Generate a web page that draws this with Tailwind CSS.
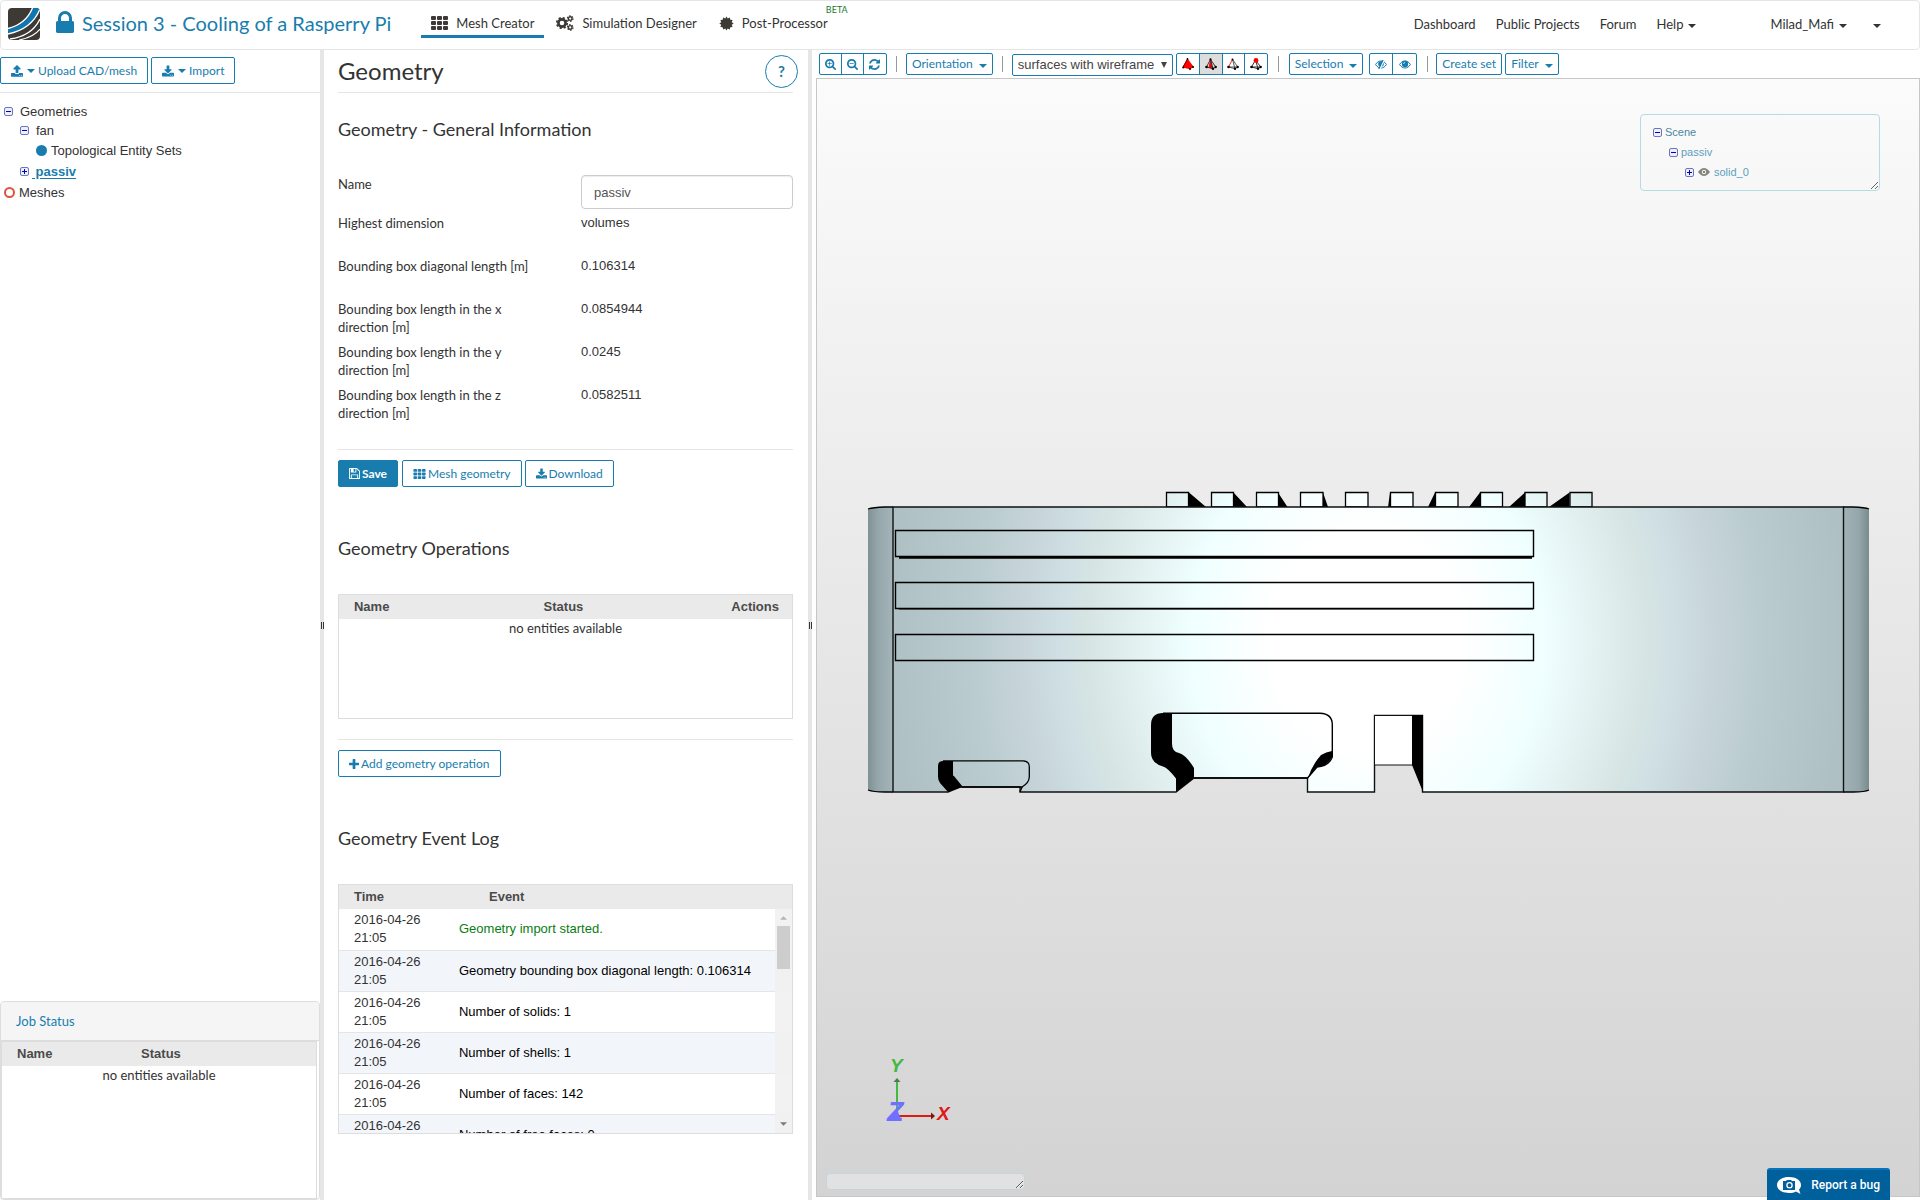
<!DOCTYPE html>
<html lang="en">
<head>
    <meta charset="UTF-8">
    <title>Session 3 - Cooling of a Rasperry Pi</title>
    <script src="https://cdn.jsdelivr.net/npm/@tailwindcss/browser@4"></script>
</head>
<body class="h-screen flex flex-col overflow-hidden bg-white font-['Lato',sans-serif] text-[13px] leading-[18px] text-[#333]">

<!-- Icons -->
<svg class="hidden">
    <symbol id="lock" viewBox="320 128 1152 1408"><path d="M640 768h512v-192q0-106-75-181t-181-75-181 75-75 181v192zm832 96v576q0 40-28 68t-68 28h-960q-40 0-68-28t-28-68v-576q0-40 28-68t68-28h32v-192q0-184 132-316t316-132 316 132 132 316v192h32q40 0 68 28t28 68z"/></symbol>
    <symbol id="grid" viewBox="0 0 17 14">
        <rect width="5" height="4" rx="1"/><rect x="6" width="5" height="4" rx="1"/><rect x="12" width="5" height="4" rx="1"/>
        <rect y="5" width="5" height="4" rx="1"/><rect x="6" y="5" width="5" height="4" rx="1"/><rect x="12" y="5" width="5" height="4" rx="1"/>
        <rect y="10" width="5" height="4" rx="1"/><rect x="6" y="10" width="5" height="4" rx="1"/><rect x="12" y="10" width="5" height="4" rx="1"/>
    </symbol>
    <symbol id="cogs" viewBox="0 0 18 16">
        <g fill="none" stroke="currentColor">
            <circle cx="6" cy="8" r="3.6" stroke-width="2.6"/>
            <circle cx="6" cy="8" r="5.2" stroke-width="1.8" stroke-dasharray="2.2 1.884"/>
            <circle cx="14.2" cy="3.6" r="1.8" stroke-width="1.4"/>
            <circle cx="14.2" cy="3.6" r="2.8" stroke-width="1.2" stroke-dasharray="1.5 1.432"/>
            <circle cx="14.2" cy="12.4" r="1.8" stroke-width="1.4"/>
            <circle cx="14.2" cy="12.4" r="2.8" stroke-width="1.2" stroke-dasharray="1.5 1.432"/>
        </g>
    </symbol>
    <symbol id="burst" viewBox="0 0 16 16">
        <path d="M8 .5 9.300 2.600 11.600 1.500 12 4 14.500 4.300 13.600 6.600 15.700 8 13.600 9.400 14.500 11.700 12 12 11.600 14.500 9.300 13.400 8 15.500 6.700 13.400 4.400 14.500 4 12 1.500 11.700 2.400 9.400.3 8 2.400 6.600 1.500 4.300 4 4 4.400 1.500 6.700 2.600z"/>
    </symbol>
    <symbol id="caret" viewBox="0 0 8 4"><path d="M0 0h8L4 4z"/></symbol>
    <symbol id="upload" viewBox="64 64 1664 1600"><path d="M1344 1472q0-26-19-45t-45-19-45 19-19 45 19 45 45 19 45-19 19-45zm256 0q0-26-19-45t-45-19-45 19-19 45 19 45 45 19 45-19 19-45zm128-224v320q0 40-28 68t-68 28h-1472q-40 0-68-28t-28-68v-320q0-40 28-68t68-28h427q21 56 70.5 92t110.5 36h256q61 0 110.5-36t70.5-92h427q40 0 68 28t28 68zm-325-648q-17 40-59 40h-256v448q0 26-19 45t-45 19h-256q-26 0-45-19t-19-45v-448h-256q-42 0-59-40-17-39 14-69l448-448q18-19 45-19t45 19l448 448q31 30 14 69z"/></symbol>
    <symbol id="download" viewBox="64 0 1664 1536"><path d="M1344 1344q0-26-19-45t-45-19-45 19-19 45 19 45 45 19 45-19 19-45zm256 0q0-26-19-45t-45-19-45 19-19 45 19 45 45 19 45-19 19-45zm128-224v320q0 40-28 68t-68 28h-1472q-40 0-68-28t-28-68v-320q0-40 28-68t68-28h465l135 136q58 56 136 56t136-56l136-136h464q40 0 68 28t28 68zm-325-569q17 41-14 70l-448 448q-18 19-45 19t-45-19l-448-448q-31-29-14-70 17-39 59-39h256v-448q0-26 19-45t45-19h256q26 0 45 19t19 45v448h256q42 0 59 39z"/></symbol>
    <symbol id="floppy" viewBox="128 128 1536 1536"><path d="M512 1536h768v-384h-768v384zm896 0h128v-896q0-14-10-38.5t-20-34.5l-281-281q-10-10-34-20t-39-10v416q0 40-28 68t-68 28h-576q-40 0-68-28t-28-68v-416h-128v1280h128v-416q0-40 28-68t68-28h832q40 0 68 28t28 68v416zm-384-928v-320q0-13-9.5-22.5t-22.5-9.5h-192q-13 0-22.5 9.5t-9.5 22.5v320q0 13 9.5 22.5t22.5 9.5h192q13 0 22.5-9.5t9.5-22.5zm640 32v928q0 40-28 68t-68 28h-1344q-40 0-68-28t-28-68v-1344q0-40 28-68t68-28h928q40 0 88 20t76 48l280 280q28 28 48 76t20 88z"/></symbol>
    <symbol id="plus" viewBox="192 128 1408 1408"><path d="M1600 736v192q0 40-28 68t-68 28h-416v416q0 40-28 68t-68 28h-192q-40 0-68-28t-28-68v-416h-416q-40 0-68-28t-28-68v-192q0-40 28-68t68-28h416v-416q0-40 28-68t68-28h192q40 0 68 28t28 68v416h416q40 0 68 28t28 68z"/></symbol>
    <symbol id="zoom-in" viewBox="64 128 1664 1664"><path d="M1088 800v64q0 13-9.500 22.500t-22.500 9.500h-224v224q0 13-9.500 22.500t-22.500 9.500h-64q-13 0-22.500-9.500t-9.500-22.500v-224h-224q-13 0-22.500-9.500t-9.500-22.500v-64q0-13 9.500-22.500t22.500-9.500h224v-224q0-13 9.500-22.500t22.500-9.500h64q13 0 22.500 9.500t9.500 22.500v224h224q13 0 22.500 9.500t9.500 22.500zm128 32q0-185-131.500-316.500t-316.500-131.500-316.500 131.500-131.500 316.500 131.500 316.500 316.500 131.500 316.500-131.500 131.500-316.500zm512 832q0 53-37.500 90.500t-90.500 37.500q-54 0-90-38l-343-342q-179 124-399 124-143 0-273.500-55.500t-225-150-150-225-55.500-273.500 55.500-273.500 150-225 225-150 273.500-55.500 273.500 55.500 225 150 150 225 55.500 273.500q0 220-124 399l343 343q37 37 37 90z"/></symbol>
    <symbol id="zoom-out" viewBox="64 128 1664 1664"><path d="M1088 800v64q0 13-9.500 22.500t-22.500 9.500h-576q-13 0-22.500-9.500t-9.500-22.500v-64q0-13 9.500-22.500t22.500-9.500h576q13 0 22.500 9.500t9.500 22.500zm128 32q0-185-131.500-316.500t-316.500-131.500-316.500 131.500-131.500 316.500 131.500 316.500 316.500 131.500 316.500-131.500 131.500-316.500zm512 832q0 53-37.500 90.500t-90.500 37.500q-54 0-90-38l-343-342q-179 124-399 124-143 0-273.500-55.500t-225-150-150-225-55.500-273.500 55.500-273.500 150-225 225-150 273.500-55.500 273.500 55.500 225 150 150 225 55.500 273.500q0 220-124 399l343 343q37 37 37 90z"/></symbol>
    <symbol id="refresh" viewBox="128 128 1536 1536"><path d="M1639 1056q0 5-1 7-64 268-268 434.500t-478 166.500q-146 0-282.500-55t-243.500-157l-129 129q-19 19-45 19t-45-19-19-45v-448q0-26 19-45t45-19h448q26 0 45 19t19 45-19 45l-137 137q71 66 161 102t187 36q134 0 250-65t186-179q11-17 53-117 8-23 30-23h192q13 0 22.500 9.500t9.500 22.500zm25-800v448q0 26-19 45t-45 19h-448q-26 0-45-19t-19-45 19-45l138-138q-148-137-349-137-134 0-250 65t-186 179q-11 17-53 117-8 23-30 23h-199q-13 0-22.500-9.500t-9.500-22.500v-7q65-268 270-434.500t480-166.500q146 0 284 55.500t245 156.500l130-129q19-19 45-19t45 19 19 45z"/></symbol>
    <symbol id="eye" viewBox="0 0 12 9">
        <path d="M.6 4.500C3.200-.2 8.800-.2 11.400 4.500 8.800 9.200 3.200 9.200.6 4.500z" fill="none" stroke="currentColor"/>
        <circle cx="6" cy="4" r="3.200"/><path d="M4.600 3.900A1.400 1.400 0 0 1 6 2.500" fill="none" stroke="#fff" stroke-width=".7"/>
    </symbol>
    <symbol id="eye-off" viewBox="0 0 12 9">
        <path d="M.6 4.500C3.200-.2 8.800-.2 11.400 4.500 8.800 9.200 3.200 9.200.6 4.500z" fill="none" stroke="currentColor"/>
        <circle cx="6" cy="4" r="2.800"/>
        <path d="M9 0 4.800 9" stroke="#fff" stroke-width="1.600"/><path d="M8 0 3.800 9" stroke="currentColor" stroke-width="1.200"/>
    </symbol>
    <symbol id="minus-box" viewBox="0 0 9 9"><rect x=".5" y=".5" width="8" height="8" rx="1.500" fill="#eef" stroke="#6b78b8"/><path d="M2 4.500h5" stroke="#0000c8"/></symbol>
    <symbol id="plus-box" viewBox="0 0 9 9"><rect x=".5" y=".5" width="8" height="8" rx="1.500" fill="#eef" stroke="#6b78b8"/><path d="M2 4.500h5M4.500 2v5" stroke="#0000c8"/></symbol>
</svg>

<!-- Header -->
<header class="h-[50px] shrink-0 flex items-start border border-[#e5e5e5] rounded-[4px]">
    <a href="#" aria-label="Home" class="ml-[7px] mt-[7px]">
        <svg class="w-8 h-8" viewBox="0 0 32 32">
            <defs><clipPath id="logo-clip"><rect width="32" height="32" rx="4"/></clipPath></defs>
            <g clip-path="url(#logo-clip)">
                <rect width="32" height="32" fill="#3d3935"/>
                <path d="M0 21Q19 17 25 0h7v1Q25 20 0 26z" fill="#0e76b0"/>
                <path d="M0 20.500Q18 16 24.500 0" fill="none" stroke="#fff" stroke-width="1.400"/>
                <path d="M0 26Q24 21 32 1" fill="none" stroke="#fff" stroke-width="1.400"/>
                <path d="M2 31Q24 28 32 11" fill="none" stroke="#fff" stroke-width="1.400"/>
                <path d="M11 32Q26 29 32 21" fill="none" stroke="#fff" stroke-width="1.200"/>
            </g>
        </svg>
    </a>
    <svg class="w-[18px] h-[22px] ml-4 mt-[10px] fill-[#187dae]"><use href="#lock"/></svg>
    <h2 class="ml-2 mt-[9px] text-[20px] leading-[26px] text-[#187dae] whitespace-nowrap">Session 3 - Cooling of a Rasperry Pi</h2>
    <nav class="ml-[30px] mt-[7px] flex gap-[2px] whitespace-nowrap">
        <a href="#" class="h-[30px] px-[10px] pt-[3px] flex items-center gap-2 border-b-[3px] border-[#187dae]"><svg class="w-[17px] h-[14px] fill-[#3d3935]"><use href="#grid"/></svg>Mesh Creator</a>
        <a href="#" class="h-[30px] px-[10px] pt-[3px] flex items-center gap-2 border-b-[3px] border-transparent"><svg class="w-[18px] h-4 text-[#3d3935]"><use href="#cogs"/></svg>Simulation Designer</a>
        <a href="#" class="h-[30px] px-[10px] pt-[3px] flex items-center gap-2 border-b-[3px] border-transparent relative"><svg class="w-[15px] h-[15px] fill-[#3d3935]"><use href="#burst"/></svg>Post-Processor<span class="absolute left-[117px] -top-1 text-[9px] leading-[12px] text-[#1a7a2e]">BETA</span></a>
    </nav>
    <nav class="ml-auto mr-[38px] mt-[14px] flex items-center whitespace-nowrap">
        <a href="#" class="mr-[20px]">Dashboard</a>
        <a href="#" class="mr-[20px]">Public Projects</a>
        <a href="#" class="mr-[20px]">Forum</a>
        <a href="#" class="mr-[74px] flex items-center gap-[5px]">Help<svg class="w-2 h-1 mt-1 fill-current"><use href="#caret"/></svg></a>
        <a href="#" class="mr-[26px] flex items-center gap-[5px]">Milad_Mafi<svg class="w-2 h-1 mt-1 fill-current"><use href="#caret"/></svg></a>
        <button type="button" aria-label="More"><svg class="w-2 h-1 mt-1 fill-current"><use href="#caret"/></svg></button>
    </nav>
</header>

<div class="flex-1 min-h-0 flex">
    <!-- Project tree -->
    <aside class="w-1/6 shrink-0 flex flex-col">
        <div class="h-[43px] shrink-0 pt-[7px] flex gap-[3px] border-b border-[#e5e5e5] text-[12px]">
            <button type="button" class="h-[27px] px-[10px] flex items-center gap-[3px] border border-[#187dae] rounded-[2px] text-[#187dae]"><svg class="w-3 h-3 fill-current"><use href="#upload"/></svg><svg class="w-2 h-1 ml-px fill-current"><use href="#caret"/></svg>Upload CAD/mesh</button>
            <button type="button" class="h-[27px] px-[10px] flex items-center gap-[3px] border border-[#187dae] rounded-[2px] text-[#187dae]"><svg class="w-3 h-3 fill-current"><use href="#download"/></svg><svg class="w-2 h-1 ml-px fill-current"><use href="#caret"/></svg>Import</button>
        </div>
        <ul class="pt-[9px] pl-1 font-['Liberation_Sans',sans-serif]">
            <li class="h-[19px] flex items-center gap-[7px]"><svg class="w-[9px] h-[9px]"><use href="#minus-box"/></svg>Geometries</li>
            <li class="h-[19px] pl-4 flex items-center gap-[7px]"><svg class="w-[9px] h-[9px]"><use href="#minus-box"/></svg>fan</li>
            <li class="h-[21px] pl-8 flex items-center gap-1"><span class="w-[11px] h-[11px] rounded-full bg-[#187dae]"></span>Topological Entity Sets</li>
            <li class="h-[21px] pl-4 flex items-center gap-[3px]"><svg class="w-[9px] h-[9px]"><use href="#plus-box"/></svg><a href="#" class="font-bold text-[#187dae] underline underline-offset-2 whitespace-pre"> passiv</a></li>
            <li class="h-[21px] flex items-center gap-1"><span class="w-[11px] h-[11px] rounded-full border-2 border-[#e0533d]"></span>Meshes</li>
        </ul>

        <!-- Job status -->
        <section class="mt-auto h-[199px] flex flex-col border border-[#ddd] rounded-[4px]">
            <h3 class="h-[39px] shrink-0 px-[15px] flex items-center bg-[#f5f5f5] border-b border-[#ddd] rounded-t-[4px] text-[#187dae]">Job Status</h3>
            <div class="flex-1 mr-[2px] border border-[#ddd]">
                <table class="w-full table-fixed">
                    <thead class="bg-[#eaeaea] font-['Liberation_Sans',sans-serif] text-[#4a4a4a]">
                        <tr class="h-6">
                            <th class="w-1/3 pl-[15px] text-left">Name</th>
                            <th class="w-1/3 pl-1 text-center">Status</th>
                            <th class="w-1/3" aria-label="Actions"></th>
                        </tr>
                    </thead>
                    <tbody>
                        <tr><td colspan="3" class="text-center">no entities available</td></tr>
                    </tbody>
                </table>
            </div>
        </section>
    </aside>

    <div class="w-1 shrink-0 flex items-center justify-end gap-px bg-[#e6e6e6]"><i class="w-px h-[7px] bg-[#333]"></i><i class="w-px h-[7px] bg-[#333]"></i></div>

    <!-- Geometry panel -->
    <section class="w-[484px] shrink-0 pl-[14px] pr-[15px] overflow-hidden">
        <div class="h-[43px] flex items-center border-b border-[#e5e5e5]">
            <h1 class="text-[24px] leading-[30px]">Geometry</h1>
            <button type="button" aria-label="Help" class="ml-auto -mr-[5px] w-[33px] h-[33px] shrink-0 rounded-full border border-[#187dae] bg-white text-[15px] font-bold text-[#187dae]">?</button>
        </div>

        <h2 class="h-[72px] mb-[10px] flex items-center text-[18px]">Geometry - General Information</h2>
        <form>
            <div class="h-[39px] flex">
                <label for="name" class="w-[243px] shrink-0">Name</label>
                <input id="name" type="text" value="passiv" class="flex-1 min-w-0 h-[34px] px-3 border border-[#ccc] rounded-[4px] font-['Liberation_Sans',sans-serif] text-[#555] shadow-[inset_0_1px_1px_rgba(0,0,0,0.075)]">
            </div>
            <dl>
                <div class="min-h-[43px] flex"><dt class="w-[243px] pr-[60px]">Highest dimension</dt><dd class="font-['Liberation_Sans',sans-serif]">volumes</dd></div>
                <div class="min-h-[43px] flex"><dt class="w-[243px] pr-[50px]">Bounding box diagonal length [m]</dt><dd class="font-['Liberation_Sans',sans-serif]">0.106314</dd></div>
                <div class="min-h-[43px] flex"><dt class="w-[243px] pr-[60px]">Bounding box length in the x direction [m]</dt><dd class="font-['Liberation_Sans',sans-serif]">0.0854944</dd></div>
                <div class="min-h-[43px] flex"><dt class="w-[243px] pr-[60px]">Bounding box length in the y direction [m]</dt><dd class="font-['Liberation_Sans',sans-serif]">0.0245</dd></div>
                <div class="min-h-[43px] flex"><dt class="w-[243px] pr-[60px]">Bounding box length in the z direction [m]</dt><dd class="font-['Liberation_Sans',sans-serif]">0.0582511</dd></div>
            </dl>
            <div class="mt-5 pt-[10px] flex border-t border-[#e5e5e5] text-[12px]">
                <button type="button" class="h-[27px] px-[10px] mr-1 flex items-center gap-[2px] border border-[#187dae] rounded-[2px] bg-[#187dae] font-bold text-white"><svg class="w-[11px] h-[11px] fill-current"><use href="#floppy"/></svg>Save</button>
                <button type="button" class="h-[27px] px-[10px] mr-[3px] flex items-center gap-[2px] border border-[#187dae] rounded-[2px] text-[#187dae]"><svg class="w-[13px] h-[10px] fill-current"><use href="#grid"/></svg>Mesh geometry</button>
                <button type="button" class="h-[27px] px-[10px] flex items-center gap-[2px] border border-[#187dae] rounded-[2px] text-[#187dae]"><svg class="w-[11px] h-[11px] fill-current"><use href="#download"/></svg>Download</button>
            </div>
        </form>

        <h2 class="mt-[25px] h-[72px] mb-[10px] flex items-center text-[18px]">Geometry Operations</h2>
        <div class="h-[125px] border border-[#ddd]">
            <table class="w-full table-fixed">
                <thead class="bg-[#eaeaea] font-['Liberation_Sans',sans-serif] text-[#4a4a4a]">
                    <tr class="h-6">
                        <th class="pl-[15px] text-left">Name</th>
                        <th class="pr-1 text-center">Status</th>
                        <th class="pr-[13px] text-right">Actions</th>
                    </tr>
                </thead>
                <tbody>
                    <tr><td colspan="3" class="text-center">no entities available</td></tr>
                </tbody>
            </table>
        </div>
        <div class="mt-5 pt-[10px] flex border-t border-[#e5e5e5] text-[12px]">
            <button type="button" class="h-[27px] px-[10px] flex items-center gap-[2px] border border-[#187dae] rounded-[2px] text-[#187dae]"><svg class="w-[10px] h-[10px] fill-current"><use href="#plus"/></svg>Add geometry operation</button>
        </div>

        <h2 class="mt-[25px] h-[72px] mb-[10px] flex items-center text-[18px]">Geometry Event Log</h2>
        <div class="h-[250px] relative overflow-hidden border border-[#ddd] font-['Liberation_Sans',sans-serif]">
            <table class="w-full table-fixed">
                <thead class="bg-[#eaeaea] text-[#4a4a4a]">
                    <tr class="h-6">
                        <th class="w-[120px] pl-[15px] text-left">Time</th>
                        <th class="pl-[30px] text-left">Event</th>
                    </tr>
                </thead>
                <tbody class="text-black">
                    <tr class="h-[41px] border-b border-[#e5e5e5]"><td class="pl-[15px] pr-6 text-[#333]">2016-04-26 21:05</td><td class="text-[#0a7d12]">Geometry import started.</td></tr>
                    <tr class="h-[41px] border-b border-[#e5e5e5] bg-[#f2f6fb]"><td class="pl-[15px] pr-6 text-[#333]">2016-04-26 21:05</td><td>Geometry bounding box diagonal length: 0.106314</td></tr>
                    <tr class="h-[41px] border-b border-[#e5e5e5]"><td class="pl-[15px] pr-6 text-[#333]">2016-04-26 21:05</td><td>Number of solids: 1</td></tr>
                    <tr class="h-[41px] border-b border-[#e5e5e5] bg-[#f2f6fb]"><td class="pl-[15px] pr-6 text-[#333]">2016-04-26 21:05</td><td>Number of shells: 1</td></tr>
                    <tr class="h-[41px] border-b border-[#e5e5e5]"><td class="pl-[15px] pr-6 text-[#333]">2016-04-26 21:05</td><td>Number of faces: 142</td></tr>
                    <tr class="h-[41px] border-b border-[#e5e5e5] bg-[#f2f6fb]"><td class="pl-[15px] pr-6 text-[#333]">2016-04-26 21:05</td><td>Number of free faces: 0</td></tr>
                </tbody>
            </table>
            <!-- Scrollbar -->
            <div class="absolute right-0 top-6 bottom-0 w-[17px] py-[7px] flex flex-col items-center bg-[#f1f1f1]/90">
                <svg class="w-[7px] h-1 shrink-0 rotate-180 fill-[#b5b5b5]"><use href="#caret"/></svg>
                <div class="mt-[6px] w-[13px] h-[43px] bg-[#cdcdcd]"></div>
                <svg class="w-[7px] h-1 shrink-0 mt-auto fill-[#7a7a7a]"><use href="#caret"/></svg>
            </div>
        </div>
    </section>

    <div class="w-1 shrink-0 flex items-center justify-end gap-px bg-[#e6e6e6]"><i class="w-px h-[7px] bg-[#333]"></i><i class="w-px h-[7px] bg-[#333]"></i></div>

    <!-- Viewer -->
    <main class="flex-1 min-w-0 pl-1 pb-[3px] flex flex-col">
        <div class="h-7 shrink-0 pl-[3px] pt-[3px] flex items-start text-[12px] text-[#187dae] whitespace-nowrap">
            <div class="h-[22px] flex border border-[#187dae] rounded-[2px] divide-x divide-[#187dae]">
                <button type="button" aria-label="Zoom in" class="w-[22px] flex items-center justify-center"><svg class="w-[11px] h-[11px] fill-current"><use href="#zoom-in"/></svg></button>
                <button type="button" aria-label="Zoom out" class="w-[22px] flex items-center justify-center"><svg class="w-[11px] h-[11px] fill-current"><use href="#zoom-out"/></svg></button>
                <button type="button" aria-label="Reset view" class="w-[22px] flex items-center justify-center"><svg class="w-[11px] h-[11px] fill-current"><use href="#refresh"/></svg></button>
            </div>
            <i class="w-px h-4 mt-[3px] mx-[9px] bg-[#999]"></i>
            <button type="button" class="h-[22px] px-[5px] flex items-center gap-[6px] border border-[#187dae] rounded-[2px]">Orientation<svg class="w-2 h-1 mt-1 fill-current"><use href="#caret"/></svg></button>
            <i class="w-px h-4 mt-[3px] mx-[9px] bg-[#999]"></i>
            <div class="relative mt-px">
                <select aria-label="Render mode" class="w-[161px] h-[22px] pl-[5px] appearance-none border border-[#187dae] rounded-[2px] bg-white font-['Liberation_Sans',sans-serif] text-[13px] leading-[18px] text-[#444]">
                    <option>surfaces with wireframe</option>
                </select>
                <svg class="absolute right-[6px] top-2 w-[6px] h-[6px] fill-[#444] pointer-events-none" viewBox="0 0 6 6"><path d="M0 0h6L3 6z"/></svg>
            </div>
            <div class="h-[22px] ml-[3px] flex border border-[#187dae] rounded-[2px] divide-x divide-[#187dae]">
                <button type="button" aria-label="Pick volumes" class="w-[23px] flex items-center justify-center"><svg class="w-3 h-3" viewBox="0 0 12 12"><path d="M5.500 .5.500 9.500l7.500 1.800L11.800 9z" fill="#f00"/><path d="M5.500 1 1 9" stroke="#700"/><circle cx="1.300" cy="9.400" r="1"/><circle cx="8" cy="11" r="1"/><circle cx="11" cy="9" r="1"/><circle cx="5.500" cy="1" r=".9"/></svg></button>
                <button type="button" aria-label="Pick faces" class="w-[23px] flex items-center justify-center bg-[#ddd]"><svg class="w-3 h-3" viewBox="0 0 12 12"><path d="M5.500 1 3.500 9.500 8 10.700z" fill="#f00"/><path d="M5.500 1.400 1.500 9 8 10.700 10.700 9zL8 10.700" fill="none" stroke="#222" stroke-width=".9"/><circle cx="1.500" cy="9" r="1.300"/><circle cx="8" cy="10.700" r="1.200"/><circle cx="10.700" cy="9" r="1.200"/><circle cx="5.500" cy="1.400" r="1.100"/></svg></button>
                <button type="button" aria-label="Pick edges" class="w-[22px] flex items-center justify-center"><svg class="w-3 h-3" viewBox="0 0 12 12"><path d="M5.500 1.400 8 10.700 10.700 9zM1.500 9 8 10.700M1.500 9h9.200" fill="none" stroke="#333" stroke-width=".8"/><path d="M5.500 1.400 1.500 9" stroke="#f22"/><circle cx="1.500" cy="9" r="1.300"/><circle cx="8" cy="10.700" r="1.200"/><circle cx="10.700" cy="9" r="1.200"/><circle cx="5.500" cy="1.400" r="1"/></svg></button>
                <button type="button" aria-label="Pick vertices" class="w-[22px] flex items-center justify-center"><svg class="w-3 h-3" viewBox="0 0 12 12"><path d="M5.500 2 1.500 9 8 10.700 10.700 9zL8 10.700M1.500 9h9.200" fill="none" stroke="#222" stroke-width=".9"/><circle cx="1.500" cy="9" r="1.300"/><circle cx="8" cy="10.700" r="1.200"/><circle cx="10.700" cy="9" r="1.200"/><circle cx="6" cy="2.400" r="2.400" fill="#f00"/></svg></button>
            </div>
            <i class="w-px h-4 mt-[3px] mx-[10px] bg-[#999]"></i>
            <button type="button" class="h-[22px] px-[5px] flex items-center gap-[6px] border border-[#187dae] rounded-[2px]">Selection<svg class="w-2 h-1 mt-1 fill-current"><use href="#caret"/></svg></button>
            <div class="h-[22px] ml-[6px] flex border border-[#187dae] rounded-[2px] divide-x divide-[#187dae]">
                <button type="button" aria-label="Hide selection" class="w-[23px] flex items-center justify-center"><svg class="w-3 h-[9px] fill-current"><use href="#eye-off"/></svg></button>
                <button type="button" aria-label="Show all" class="w-[23px] flex items-center justify-center"><svg class="w-3 h-[9px] fill-current"><use href="#eye"/></svg></button>
            </div>
            <i class="w-px h-4 mt-[3px] ml-[10px] mr-2 bg-[#999]"></i>
            <button type="button" class="h-[22px] px-[5px] mr-[3px] border border-[#187dae] rounded-[2px]">Create set</button>
            <button type="button" class="h-[22px] px-[5px] flex items-center gap-[6px] border border-[#187dae] rounded-[2px]">Filter<svg class="w-2 h-1 mt-1 fill-current"><use href="#caret"/></svg></button>
        </div>

        <div class="relative flex-1 min-h-0 border border-[#c6c6c6] bg-linear-to-b from-[#fbfbfb] to-[#d3d3d3]">
            <!-- Model, side view -->
            <svg class="w-full h-full" viewBox="817 79 1102 1117">
                <defs>
                    <radialGradient id="face" gradientUnits="userSpaceOnUse" cx="1367" cy="640" r="480" gradientTransform="translate(0 -96) scale(1 1.15)">
                        <stop offset=".2" stop-color="#fff"/>
                        <stop offset=".365" stop-color="#f0ffff"/>
                        <stop offset=".59" stop-color="#d5e4e3"/>
                        <stop offset=".64" stop-color="#cfdfe4"/>
                        <stop offset=".72" stop-color="#c7d5da"/>
                        <stop offset=".83" stop-color="#b9cbce"/>
                        <stop offset="1" stop-color="#afc0c4"/>
                    </radialGradient>
                    <linearGradient id="left-edge"><stop stop-color="#7f9194"/><stop offset=".4" stop-color="#95a7aa"/><stop offset="1" stop-color="#a3b5b9"/></linearGradient>
                    <linearGradient id="right-edge"><stop stop-color="#a1b3b7"/><stop offset=".6" stop-color="#95a7aa"/><stop offset="1" stop-color="#7a8b8e"/></linearGradient>
                </defs>

                <!-- heat sink fins -->
                <path d="M1189 492.500 1206 507h-17zM1233.500 492.500 1247 507h-13.500zM1278 492.500l9.500 14.500h-9.500zM1323 492.500l5 14.500h-5zM1390 492.500l-2 14.500h3zM1435 492.500l-7 14.500h7zM1480 492.500 1469 507h11zM1525 492.500 1509 507h16zM1569.500 492.500 1549 507h20.500z"/>
                <path d="M1166.500 507v-14.500h22V507zM1211.500 507v-14.500h22V507zM1256.500 507v-14.500h22V507zM1300.500 507v-14.500h22.500V507zM1345.500 507v-14.500h22.500V507zM1390.500 507v-14.500h22.500V507zM1435.500 507v-14.500h22.500V507zM1480.500 507v-14.500h22V507zM1525 507v-14.500h22V507zM1570 507v-14.500h22V507z" fill="url(#face)" stroke="#000" stroke-width="1.300"/>

                <!-- rounded ends -->
                <path d="M893 507h-8q-12 .5-17 2v281q5 2 17 2h8z" fill="url(#left-edge)"/>
                <path d="M1843 507h10q12 .5 16 2v281q-4 2-16 2h-10z" fill="url(#right-edge)"/>
                <path d="M893 507h-8q-12 .5-17 2M868 790q5 2 17 2h8M1843 507h10q12 .5 16 2M1869 790q-4 2-16 2h-10" fill="none" stroke="#000" stroke-width="1.300"/>

                <!-- main face -->
                <path d="M893 507H1843.500V792H1422.500V715.500H1374.500V792H1307.500V778H1194L1176 792H1020V787H960L948 792H893z" fill="url(#face)" stroke="#111" stroke-width="1.400"/>
                <path d="M1374.500 715.500h48V765h-48z" fill="#fff" stroke="#111"/>
                <path d="M1412 715h11v77l-11-27z"/>

                <!-- vents -->
                <g fill="none" stroke="#000" stroke-width="1.400">
                    <path d="M895.500 530.500h638v26h-638zM895.500 582.500h638v26h-638zM895.500 634.500h638v26h-638z"/>
                    <path d="M899 557.500h633" stroke-width="2.400"/>
                    <path d="M899 608.800h634"/>
                </g>

                <!-- small connector -->
                <path d="M948 792 940 783Q938 780 938 777V766Q938 761 943 761H953V776L962 787z"/>
                <path d="M943 760.800H1023Q1029.300 761 1029.300 767V777Q1029 783 1022 787L1020 792M953 776 962 787H1023" fill="none" stroke="#000" stroke-width="1.300"/>

                <!-- large connector -->
                <path d="M1176 792V778.500Q1168 768 1163 766.500 1151 763 1151 753V725Q1151 713 1163 713H1172V742Q1171.500 752 1179 753 1186 755 1194 768V778z"/>
                <path d="M1163 713.200H1320Q1332.300 713.500 1332.300 725V757Q1329 766 1317 767L1307.500 778H1194" fill="none" stroke="#000" stroke-width="1.400"/>
                <path d="M1332 751V757Q1328 766 1317 767L1308 778Q1312 765 1321 755 1326 752 1332 751z"/>

                <!-- axes -->
                <path d="M897 1116V1081" stroke="#43b943" stroke-width="2"/>
                <path d="M893.500 1082h7l-3.500-4z" fill="#4b7d4b"/>
                <path d="M899 1116h34" stroke="#e01818" stroke-width="2"/>
                <path d="M931 1112.500v7l4-3.500z" fill="#7c1414"/>
                <path d="M897 1109 888 1121h13.500z" fill="#7070ff"/>
                <g class="font-['Liberation_Sans',sans-serif] font-bold italic">
                    <text x="890" y="1072" font-size="19" fill="#43b943">Y</text>
                    <text x="937" y="1120" font-size="19" fill="#e01818">X</text>
                    <text x="887" y="1121" font-size="27" fill="#7070ff">Z</text>
                </g>
            </svg>

            <!-- Scene tree -->
            <div class="absolute right-[39px] top-[35px] w-[240px] h-[77px] resize overflow-hidden pl-3 pt-[7px] border border-[#b5dce6] rounded-[4px] font-['Liberation_Sans',sans-serif] text-[11px] text-[#5d9fbe]">
                <ul>
                    <li class="h-5 flex items-center gap-[3px] text-[#4a86a3]"><svg class="w-[9px] h-[9px]"><use href="#minus-box"/></svg>Scene</li>
                    <li class="h-5 pl-4 flex items-center gap-[3px]"><svg class="w-[9px] h-[9px]"><use href="#minus-box"/></svg>passiv</li>
                    <li class="h-5 pl-8 flex items-center gap-[4px]"><svg class="w-[9px] h-[9px]"><use href="#plus-box"/></svg><svg class="w-3 h-2" viewBox="0 0 12 8"><path d="M0 4Q6-4 12 4 6 12 0 4z" fill="#85857a"/><circle cx="6" cy="4" r="2.200" fill="#eee"/><circle cx="6" cy="4" r="1.100" fill="#666"/></svg>solid_0</li>
                </ul>
            </div>

            <textarea aria-label="Messages" class="absolute left-[9px] bottom-[6px] w-[199px] h-[17px] resize overflow-hidden border border-[#c3d6de] rounded-[4px] bg-[#e1e1e1]"></textarea>
        </div>
    </main>
</div>

<button type="button" class="absolute right-[30px] bottom-0 h-8 px-[10px] flex items-center gap-[10px] border-t-2 border-[#0a72b8] rounded-t-[3px] bg-[#00609c] font-['Roboto',sans-serif] text-[12px] font-medium text-white">
    <svg class="w-6 h-[17px]" viewBox="0 0 24 17"><path d="M12 0C5 0 0 3.500 0 8s5 8 12 8c3 0 5-.5 7-1.500L23.500 17l-1.500-4.500C23.500 11 24 9.500 24 8c0-4.500-5-8-12-8z" fill="#fff"/><path d="M6 4h3l1-1h4l1 1h3v9H6z" fill="#00609c"/><circle cx="12.500" cy="8.300" r="2.600" fill="none" stroke="#fff" stroke-width="1.300"/></svg>
    Report a bug
</button>
</body>
</html>
